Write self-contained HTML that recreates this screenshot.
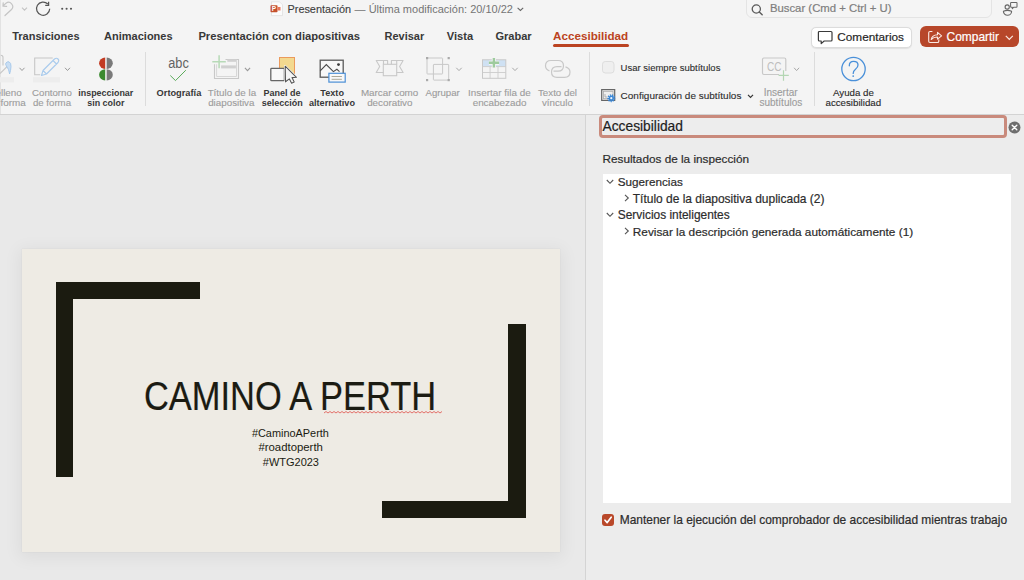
<!DOCTYPE html>
<html><head><meta charset="utf-8">
<style>
html,body{margin:0;padding:0;}
body{width:1024px;height:580px;overflow:hidden;position:relative;background:#f4f4f4;font-family:"Liberation Sans",sans-serif;}
.a{position:absolute;}
.t{position:absolute;white-space:pre;}
svg{position:absolute;overflow:visible;}
</style></head><body>
<!-- top chrome bg -->
<div class="a" style="left:0;top:0;width:1024px;height:114px;background:#f4f4f4"></div>
<div class="a" style="left:0;top:0;width:1px;height:114px;background:#e2e2e2"></div>
<!-- ribbon bottom line -->
<div class="a" style="left:0;top:114px;width:1024px;height:1px;background:#d3d3d3"></div>
<!-- canvas -->
<div class="a" style="left:0;top:115px;width:585px;height:465px;background:#e9e9e9"></div>
<!-- panel -->
<div class="a" style="left:585px;top:115px;width:1px;height:465px;background:#d4d4d4"></div>
<div class="a" style="left:586px;top:115px;width:438px;height:465px;background:#ececec"></div>

<!-- slide shadow + slide -->
<div class="a" style="left:22px;top:249px;width:538px;height:303px;background:#eeebe4;box-shadow:0 0 1px rgba(0,0,0,0.10),0 3px 16px 3px rgba(0,0,0,0.055)"></div>
<div class="a" style="left:55.5px;top:282.4px;width:144.2px;height:16.8px;background:#1b1b10"></div>
<div class="a" style="left:55.5px;top:282.4px;width:17.7px;height:194.2px;background:#1b1b10"></div>
<div class="a" style="left:508.2px;top:324.1px;width:17.7px;height:193.8px;background:#1b1b10"></div>
<div class="a" style="left:381.6px;top:501.2px;width:144.3px;height:16.7px;background:#1b1b10"></div>
<!-- squiggle -->
<svg style="left:324px;top:410.8px" width="116" height="4"><path d="M0 2 l2 -1.5 l2 1.5 l2 -1.5 l2 1.5 l2 -1.5 l2 1.5 l2 -1.5 l2 1.5 l2 -1.5 l2 1.5 l2 -1.5 l2 1.5 l2 -1.5 l2 1.5 l2 -1.5 l2 1.5 l2 -1.5 l2 1.5 l2 -1.5 l2 1.5 l2 -1.5 l2 1.5 l2 -1.5 l2 1.5 l2 -1.5 l2 1.5 l2 -1.5 l2 1.5 l2 -1.5 l2 1.5 l2 -1.5 l2 1.5 l2 -1.5 l2 1.5 l2 -1.5 l2 1.5 l2 -1.5 l2 1.5 l2 -1.5 l2 1.5 l2 -1.5 l2 1.5 l2 -1.5 l2 1.5 l2 -1.5 l2 1.5 l2 -1.5 l2 1.5 l2 -1.5 l2 1.5 l2 -1.5 l2 1.5 l2 -1.5 l2 1.5 l2 -1.5 l2 1.5 l2 -1.5 l2 1.5 l2 -1.5" fill="none" stroke="#e0514a" stroke-width="0.8"/></svg>

<!-- panel contents -->
<div class="a" style="left:599px;top:115px;width:402px;height:16.5px;border:3px solid #c98a7c;border-radius:4px;background:#ededed"></div>
<svg style="left:1008px;top:120.5px" width="13" height="13" viewBox="0 0 13 13"><circle cx="6.5" cy="6.5" r="6" fill="#6e6e6e"/><path d="M4.2 4.2 L8.8 8.8 M8.8 4.2 L4.2 8.8" stroke="#fff" stroke-width="1.4" stroke-linecap="round"/></svg>
<div class="a" style="left:602.5px;top:174px;width:408.5px;height:329px;background:#ffffff"></div>
<svg style="left:606px;top:179px" width="8" height="6" viewBox="0 0 8 6"><path d="M0.8 1 L4 4.3 L7.2 1" fill="none" stroke="#555" stroke-width="1.1"/></svg>
<svg style="left:606px;top:212px" width="8" height="6" viewBox="0 0 8 6"><path d="M0.8 1 L4 4.3 L7.2 1" fill="none" stroke="#555" stroke-width="1.1"/></svg>
<svg style="left:623.5px;top:194px" width="6" height="8" viewBox="0 0 6 8"><path d="M1 0.8 L4.3 4 L1 7.2" fill="none" stroke="#555" stroke-width="1.1"/></svg>
<svg style="left:623.5px;top:227px" width="6" height="8" viewBox="0 0 6 8"><path d="M1 0.8 L4.3 4 L1 7.2" fill="none" stroke="#555" stroke-width="1.1"/></svg>
<div class="a" style="left:602px;top:514px;width:12px;height:12px;border-radius:3px;background:#b9482a"></div>
<svg style="left:602px;top:514px" width="12" height="12" viewBox="0 0 12 12"><path d="M3 6.2 L5.2 8.6 L9.2 3.2" fill="none" stroke="#fff" stroke-width="1.7" stroke-linecap="round" stroke-linejoin="round"/></svg>

<!-- title bar -->
<div class="a" style="left:745.5px;top:-6px;width:244px;height:22px;border:1px solid #e4e4e4;border-radius:6px;background:#f5f5f5"></div>
<svg style="left:751px;top:3.5px" width="13" height="12" viewBox="0 0 13 12"><circle cx="5.3" cy="5" r="4.1" fill="none" stroke="#5a5a5a" stroke-width="1.3"/><path d="M8.3 8 L11.2 10.8" stroke="#5a5a5a" stroke-width="1.4" stroke-linecap="round"/></svg>
<!-- undo -->
<svg style="left:0;top:0" width="80" height="20" viewBox="0 0 80 20">
 <path d="M5 15.5 L11.5 9.5 A4.2 4.2 0 0 0 6 3.2 L3 6.2 M3 6.2 L3.2 2.8 M3 6.2 L6.6 6.4" fill="none" stroke="#c4c4c4" stroke-width="1.2" stroke-linecap="round" stroke-linejoin="round"/>
 <path d="M22 7.6 L24.5 10.2 L27 7.6" fill="none" stroke="#c4c4c4" stroke-width="1.1"/>
 <path d="M47.8 4 A6.6 6.6 0 1 0 49.7 8.8" fill="none" stroke="#555" stroke-width="1.25"/>
 <path d="M48.6 1.8 L48.6 5.3 L45.2 5.3" fill="none" stroke="#555" stroke-width="1.25" stroke-linejoin="miter"/>
 <circle cx="62.2" cy="8.8" r="1.05" fill="#555"/><circle cx="66.6" cy="8.8" r="1.05" fill="#555"/><circle cx="71" cy="8.8" r="1.05" fill="#555"/>
</svg>
<!-- ppt doc icon -->
<svg style="left:270px;top:1px" width="14" height="16" viewBox="0 0 14 16">
 <path d="M1.5 0.8 H9.5 L12.5 3.8 V14.6 H1.5 Z" fill="#fbfbfb" stroke="#d8d8d8" stroke-width="0.6"/>
 <rect x="0.5" y="4.3" width="7" height="7" rx="0.8" fill="#c4502c"/>
 <path d="M7.5 6 H10.5 V9.5 H7.5" fill="#e8775a"/>
 <text x="1.8" y="10.3" font-family="Liberation Sans" font-weight="bold" font-size="6.5" fill="#fff">P</text>
</svg>
<svg style="left:517px;top:6.5px" width="8" height="5" viewBox="0 0 8 5"><path d="M0.6 0.8 L3.4 3.5 L6.2 0.8" fill="none" stroke="#666" stroke-width="1.1"/></svg>
<!-- person icon -->
<svg style="left:1000px;top:0px" width="20" height="18" viewBox="0 0 20 18">
 <circle cx="7.2" cy="7" r="2.1" fill="none" stroke="#666" stroke-width="1.1"/>
 <path d="M3.4 11.2 Q7.5 9.6 11.6 11.2 A4.1 4.1 0 0 1 3.4 11.2 Z" fill="none" stroke="#666" stroke-width="1.1" stroke-linejoin="round"/>
 <path d="M11.3 2.4 H16.3 Q17 2.4 17 3.1 V6.6 Q17 7.3 16.3 7.3 H13.6 L12.3 8.6 V7.3 H11.3 Q10.6 7.3 10.6 6.6 V3.1 Q10.6 2.4 11.3 2.4 Z" fill="none" stroke="#666" stroke-width="1.05" stroke-linejoin="round"/>
</svg>
<!-- tab underline -->
<div class="a" style="left:553px;top:44.3px;width:76px;height:2.7px;border-radius:1.5px;background:#bb4321"></div>
<!-- Comentarios -->
<div class="a" style="left:811px;top:26.5px;width:99px;height:19px;border:0.8px solid #dcdcdc;border-radius:5px;background:#fff;box-shadow:0 0.5px 1px rgba(0,0,0,0.08)"></div>
<svg style="left:817px;top:29.5px" width="17" height="15" viewBox="0 0 17 15">
 <path d="M2.4 1.5 H14 Q15 1.5 15 2.5 V10 Q15 11 14 11 H7.2 L4.2 13.6 L4.2 11 H2.4 Q1.4 11 1.4 10 V2.5 Q1.4 1.5 2.4 1.5 Z" fill="none" stroke="#3a3a3a" stroke-width="1.2" stroke-linejoin="round"/>
</svg>
<!-- Compartir -->
<div class="a" style="left:920px;top:26px;width:99px;height:21px;border-radius:6px;background:#b7472a"></div>
<svg style="left:927px;top:30px" width="16" height="14" viewBox="0 0 16 14">
 <path d="M5 1.5 H3 Q1.7 1.5 1.7 2.8 V11.3 Q1.7 12.5 3 12.5 H10.5 Q11.8 12.5 11.8 11.2 V9.8" fill="none" stroke="#fbe9e3" stroke-width="1.1" stroke-linecap="round"/>
 <path d="M4.2 9.5 Q5 5 10.5 4.8 V2.3 L14.6 5.8 L10.5 9.2 V7 Q6.8 6.8 4.2 9.5 Z" fill="none" stroke="#fbe9e3" stroke-width="1.1" stroke-linejoin="round"/>
</svg>
<svg style="left:1005px;top:34.5px" width="9" height="6" viewBox="0 0 9 6"><path d="M0.8 0.8 L4.3 4.3 L7.8 0.8" fill="none" stroke="#fbe9e3" stroke-width="1.2"/></svg>

<!-- ribbon separators -->
<div class="a" style="left:145px;top:52px;width:1px;height:54px;background:#dcdcdc"></div>
<div class="a" style="left:589px;top:52px;width:1px;height:54px;background:#dcdcdc"></div>
<div class="a" style="left:814px;top:52px;width:1px;height:54px;background:#dcdcdc"></div>

<!-- ===== RIBBON ICONS ===== -->
<svg style="left:0;top:0" width="1024" height="114" viewBox="0 0 1024 114">
 <!-- Relleno (fill) partial -->
 <path d="M3 65.5 V57.5 Q3 55.3 0.8 55.3" fill="none" stroke="#c6c6c6" stroke-width="1.1"/>
 <path d="M0 73.5 L8.5 65.2" fill="none" stroke="#c6c6c6" stroke-width="1.1"/>
 <path d="M5.8 63.2 Q7 61.3 9 61.8 Q11.2 62.8 11 66.5 Q10.8 70.5 9.6 74 Q9.2 69.5 6.3 65.8 Q5.3 64.5 5.8 63.2 Z" fill="#c9def3" stroke="#a3c6ea" stroke-width="0.9"/>
 <rect x="0" y="77.2" width="14" height="5.2" fill="#ededed"/>
 <path d="M19.5 67.8 L22 70.5 L24.5 67.8" fill="none" stroke="#9a9a9a" stroke-width="1"/>
 <!-- Contorno -->
 <path d="M52.7 58 H34.7 V74.8 H40.2" fill="none" stroke="#c6c6c6" stroke-width="1.1"/>
 <path d="M41.5 75.5 L43 70.5 L54.5 59 Q56.5 57.5 58 59 Q59.5 60.5 58 62.5 L46.5 74 Z M43 70.5 L46.5 74 M53 60.5 L56.5 64" fill="none" stroke="#a9cbed" stroke-width="1.1" stroke-linejoin="round"/>
 <rect x="33" y="77.2" width="27" height="5.2" fill="#ededed"/>
 <path d="M65 67.8 L67.5 70.5 L70 67.8" fill="none" stroke="#9a9a9a" stroke-width="1"/>
 <!-- inspeccionar sin color -->
 <path d="M105.2 57.6 A6.1 5.7 0 0 0 105.2 69 Z" fill="#c23b22"/>
 <path d="M106.7 57.6 A6.1 5.7 0 0 1 106.7 69 Z" fill="#7a7a7a"/>
 <path d="M105.2 69.2 A6.1 5.6 0 0 0 105.2 80.4 Z" fill="#3b8a2f"/>
 <path d="M106.7 69.2 A6.1 5.6 0 0 1 106.7 80.4 Z" fill="#7a7a7a"/>
 <!-- Ortografía -->
 <text x="168.2" y="67.6" font-family="Liberation Sans" font-size="14" fill="#636363" textLength="20.6" lengthAdjust="spacingAndGlyphs">abc</text>
 <path d="M170.3 75.5 L175.5 80.6 L185.8 70.2" fill="none" stroke="#5aab5a" stroke-width="1"/>
 <!-- Título de la diapositiva -->
 <path d="M225.5 59.5 H238.5 V78.5 H214.5 V64.3" fill="none" stroke="#c8c8c8" stroke-width="1.1"/>
 <path d="M216.6 64.3 V76.5 H236.5 V61.5" fill="none" stroke="#d4d4d4" stroke-width="0.9"/>
 <rect x="227.3" y="59.3" width="9.5" height="2.5" fill="#d0d0d0"/>
 <rect x="221.1" y="65.4" width="14.8" height="3" fill="#d0d0d0"/>
 <path d="M212.3 61.7 H225.8 M219.1 55.2 V68.2" fill="none" stroke="#b7dab7" stroke-width="1.5"/>
 <path d="M244.9 67.8 L247.5 70.6 L250.1 67.8" fill="none" stroke="#9a9a9a" stroke-width="1.1"/>
 <!-- Panel de selección -->
 <rect x="279.5" y="57.5" width="15" height="16" fill="#f3d98f" stroke="#eb9a5c" stroke-width="1"/>
 <rect x="270.8" y="68.4" width="13.6" height="12.3" rx="0.8" fill="#f8f8f8" stroke="#666" stroke-width="1.3"/>
 <path d="M285.2 66.2 L296.5 77.3 L292 77.6 L294.2 82.1 L291.6 83.2 L289.4 78.9 L285.5 81.8 Z" fill="#f0f0f0" stroke="#fff" stroke-width="2.2" stroke-linejoin="round"/>
 <path d="M285.2 66.2 L296.5 77.3 L292 77.6 L294.2 82.1 L291.6 83.2 L289.4 78.9 L285.5 81.8 Z" fill="#f5f5f5" stroke="#555" stroke-width="1.1" stroke-linejoin="round"/>
 <!-- Texto alternativo -->
 <rect x="320.2" y="60.2" width="23" height="17" fill="#f8f8f8" stroke="#5a5a5a" stroke-width="1.3"/>
 <path d="M320.2 70.8 L326.3 64.6 L333.4 71.6 L336.9 69.3 L339.5 71.6" fill="none" stroke="#4a4a4a" stroke-width="1.1"/>
 <circle cx="338.5" cy="64.6" r="1.4" fill="#3a3a3a"/>
 <rect x="328.9" y="73.3" width="16.3" height="8.8" fill="#f8f8f8" stroke="#4b8fd6" stroke-width="1.2"/>
 <path d="M331.6 76.5 H341.9 M331.6 79.3 H341.9" stroke="#a19f8f" stroke-width="0.9"/>
 <!-- Marcar como decorativo -->
 <path d="M383.5 60.5 H376.2 L379.7 66.5 L376.2 72.5 H383.5 M396.7 60.5 H403.1 L399.6 66.5 L403.1 72.5 H396.7 M383.5 64.3 V60.5 H387.6 V64.3 M391.4 64.3 V60.5 H396.7 V64.3" fill="none" stroke="#c8c8c8" stroke-width="1.1" stroke-linejoin="round"/>
 <rect x="383.3" y="64.3" width="13.4" height="11.4" fill="none" stroke="#c8c8c8" stroke-width="1.1"/>
 <!-- Agrupar -->
 <rect x="427" y="58" width="15.6" height="16" rx="0.6" fill="none" stroke="#c8c8c8" stroke-width="1"/>
 <rect x="433.4" y="64.4" width="15.3" height="15.7" rx="0.6" fill="none" stroke="#c8c8c8" stroke-width="1"/>
 <rect x="426" y="57" width="2.2" height="2.2" fill="#aaa"/><rect x="447.6" y="57" width="2.2" height="2.2" fill="#aaa"/>
 <rect x="426" y="79" width="2.2" height="2.2" fill="#aaa"/><rect x="447.6" y="79" width="2.2" height="2.2" fill="#aaa"/>
 <path d="M456.3 67.8 L459 70.6 L461.7 67.8" fill="none" stroke="#a8a8a8" stroke-width="1"/>
 <!-- Insertar fila de encabezado -->
 <rect x="482.5" y="59.8" width="23.3" height="6.8" fill="#cfe1f3"/>
 <rect x="482.5" y="59.8" width="23.3" height="18.5" fill="none" stroke="#c8c8c8" stroke-width="1"/>
 <path d="M482.5 66.6 H505.8 M482.5 72.5 H505.8 M490.1 66.6 V78.3 M498 66.6 V78.3" stroke="#cccccc" stroke-width="0.9"/>
 <path d="M488.9 62.8 H499.1 M493.9 58 V67.6" stroke="#f4f4f4" stroke-width="4.2"/>
 <path d="M488.9 62.8 H499.1 M493.9 58 V67.6" stroke="#9ecb9e" stroke-width="2.4"/>
 <path d="M512.3 67.8 L515 70.6 L517.7 67.8" fill="none" stroke="#a8a8a8" stroke-width="1"/>
 <!-- Texto del vínculo -->
 <path d="M549.5 71 Q545.5 69.5 545.5 65.8 Q545.5 60.5 551 60.5 H558 Q563.5 60.5 563.5 65.8 Q563.5 71.2 558 71.2 H553.5" fill="none" stroke="#c8c8c8" stroke-width="1.2"/>
 <path d="M565.5 66.9 Q570 68.4 570 72 Q570 77.3 564.5 77.3 H557 Q551.5 77.3 551.5 72 Q551.5 66.6 557 66.6 H561.5" fill="none" stroke="#c8c8c8" stroke-width="1.2"/>
 <!-- checkbox unchecked -->
 <rect x="602.5" y="61.5" width="11.5" height="11.5" rx="2.8" fill="#efefef" stroke="#dadada" stroke-width="0.9"/>
 <!-- config subtitulos -->
 <rect x="601.7" y="89.6" width="13" height="10.8" fill="#efefef" stroke="#666" stroke-width="1.2"/>
 <rect x="603.4" y="91.3" width="9.6" height="7.4" fill="none" stroke="#aaa" stroke-width="0.8"/>
 <path d="M605 94 V97 H607" fill="none" stroke="#999" stroke-width="0.7"/>
 <g transform="translate(611.3 98.2)">
  <circle r="3.2" fill="none" stroke="#3a87d6" stroke-width="1.6" stroke-dasharray="1.3 0.9"/>
  <circle r="2.6" fill="#3a87d6"/>
  <circle r="1.1" fill="#eaf2fb"/>
 </g>
 <path d="M748 94.8 L750.5 97.3 L753 94.8" fill="none" stroke="#333" stroke-width="1.2"/>
 <!-- CC -->
 <path d="M779 74.5 H764 Q762.5 74.5 762.5 73 V59.5 Q762.5 58 764 58 H784.3 Q785.8 58 785.8 59.5 V71" fill="none" stroke="#c8c8c8" stroke-width="1.2"/>
 <text x="767" y="71" font-family="Liberation Sans" font-size="12" fill="#bdbdbd" textLength="14.5" lengthAdjust="spacingAndGlyphs">CC</text>
 <path d="M778.6 75.4 H788.8 M783.5 70.2 V80.7" stroke="#b3d6b3" stroke-width="1.2"/>
 <path d="M794.1 67.8 L796.6 70.6 L799.1 67.8" fill="none" stroke="#a8a8a8" stroke-width="1"/>
 <!-- help -->
 <circle cx="853.5" cy="69" r="11.7" fill="none" stroke="#4a90d9" stroke-width="1.3"/>
 <path d="M849.3 65.8 Q849.3 61.4 853.6 61.4 Q858 61.4 858 65 Q858 67.3 855.5 69.2 Q853.2 71 853.2 73.4" fill="none" stroke="#4a90d9" stroke-width="1.3" stroke-linecap="round"/>
 <circle cx="853.2" cy="76.1" r="0.9" fill="#4a90d9"/>
</svg>

<span class="t" style="left:287.50px;top:4px;font-size:10.88px;line-height:10.88px;font-weight:normal;color:#3e3e3e;-webkit-text-stroke:0.12px currentColor;">Presentación</span>
<span class="t" style="left:354.60px;top:4px;font-size:11.00px;line-height:11.00px;font-weight:normal;color:#747474;">— Última modificación: 20/10/22</span>
<span class="t" style="left:769.90px;top:3px;font-size:11.35px;line-height:11.35px;font-weight:normal;color:#7e7e7e;-webkit-text-stroke:0.2px currentColor;">Buscar (Cmd + Ctrl + U)</span>
<span class="t" style="left:12.20px;top:31px;font-size:11.02px;line-height:11.02px;font-weight:bold;color:#383838;">Transiciones</span>
<span class="t" style="left:104.10px;top:31px;font-size:11.01px;line-height:11.01px;font-weight:bold;color:#383838;">Animaciones</span>
<span class="t" style="left:198.40px;top:31px;font-size:11.23px;line-height:11.23px;font-weight:bold;color:#383838;">Presentación con diapositivas</span>
<span class="t" style="left:384.60px;top:31px;font-size:10.96px;line-height:10.96px;font-weight:bold;color:#383838;">Revisar</span>
<span class="t" style="left:446.80px;top:31px;font-size:11.09px;line-height:11.09px;font-weight:bold;color:#383838;">Vista</span>
<span class="t" style="left:495.40px;top:31px;font-size:11.07px;line-height:11.07px;font-weight:bold;color:#383838;">Grabar</span>
<span class="t" style="left:553.10px;top:30px;font-size:11.65px;line-height:11.65px;font-weight:bold;color:#bb4321;">Accesibilidad</span>
<span class="t" style="left:837.30px;top:31px;font-size:11.77px;line-height:11.77px;font-weight:normal;color:#262626;-webkit-text-stroke:0.2px currentColor;">Comentarios</span>
<span class="t" style="left:946.60px;top:32px;font-size:11.94px;line-height:11.94px;font-weight:normal;color:#ffffff;-webkit-text-stroke:0.2px currentColor;">Compartir</span>
<span class="t" style="left:-11.67px;top:88px;font-size:9.90px;line-height:9.90px;font-weight:normal;color:#9c9c9c;-webkit-text-stroke:0.12px currentColor;">Relleno</span>
<span class="t" style="left:-13.27px;top:98px;font-size:9.90px;line-height:9.90px;font-weight:normal;color:#9c9c9c;-webkit-text-stroke:0.12px currentColor;">de forma</span>
<span class="t" style="left:32.07px;top:88px;font-size:9.66px;line-height:9.66px;font-weight:normal;color:#9c9c9c;-webkit-text-stroke:0.12px currentColor;">Contorno</span>
<span class="t" style="left:32.93px;top:98px;font-size:9.66px;line-height:9.66px;font-weight:normal;color:#9c9c9c;-webkit-text-stroke:0.12px currentColor;">de forma</span>
<span class="t" style="left:78.32px;top:89px;font-size:8.91px;line-height:8.91px;font-weight:bold;color:#383838;">inspeccionar</span>
<span class="t" style="left:87.28px;top:99px;font-size:8.91px;line-height:8.91px;font-weight:bold;color:#383838;">sin color</span>
<span class="t" style="left:156.60px;top:89px;font-size:9.25px;line-height:9.25px;font-weight:bold;color:#383838;">Ortografía</span>
<span class="t" style="left:207.63px;top:88px;font-size:9.81px;line-height:9.81px;font-weight:normal;color:#9c9c9c;-webkit-text-stroke:0.12px currentColor;">Título de la</span>
<span class="t" style="left:208.17px;top:98px;font-size:9.81px;line-height:9.81px;font-weight:normal;color:#9c9c9c;-webkit-text-stroke:0.12px currentColor;">diapositiva</span>
<span class="t" style="left:263.60px;top:89px;font-size:9.00px;line-height:9.00px;font-weight:bold;color:#383838;">Panel de</span>
<span class="t" style="left:261.79px;top:99px;font-size:9.00px;line-height:9.00px;font-weight:bold;color:#383838;">selección</span>
<span class="t" style="left:320.33px;top:89px;font-size:9.12px;line-height:9.12px;font-weight:bold;color:#383838;">Texto</span>
<span class="t" style="left:308.94px;top:99px;font-size:9.12px;line-height:9.12px;font-weight:bold;color:#383838;">alternativo</span>
<span class="t" style="left:360.93px;top:88px;font-size:9.84px;line-height:9.84px;font-weight:normal;color:#9c9c9c;-webkit-text-stroke:0.12px currentColor;">Marcar como</span>
<span class="t" style="left:367.16px;top:98px;font-size:9.84px;line-height:9.84px;font-weight:normal;color:#9c9c9c;-webkit-text-stroke:0.12px currentColor;">decorativo</span>
<span class="t" style="left:425.50px;top:88px;font-size:9.64px;line-height:9.64px;font-weight:normal;color:#9c9c9c;-webkit-text-stroke:0.12px currentColor;">Agrupar</span>
<span class="t" style="left:468.11px;top:88px;font-size:9.90px;line-height:9.90px;font-weight:normal;color:#9c9c9c;-webkit-text-stroke:0.12px currentColor;">Insertar fila de</span>
<span class="t" style="left:472.65px;top:98px;font-size:9.90px;line-height:9.90px;font-weight:normal;color:#9c9c9c;-webkit-text-stroke:0.12px currentColor;">encabezado</span>
<span class="t" style="left:537.99px;top:88px;font-size:9.75px;line-height:9.75px;font-weight:normal;color:#9c9c9c;-webkit-text-stroke:0.12px currentColor;">Texto del</span>
<span class="t" style="left:541.91px;top:98px;font-size:9.75px;line-height:9.75px;font-weight:normal;color:#9c9c9c;-webkit-text-stroke:0.12px currentColor;">vínculo</span>
<span class="t" style="left:620.60px;top:63px;font-size:9.51px;line-height:9.51px;font-weight:normal;color:#2e2e2e;-webkit-text-stroke:0.12px currentColor;">Usar siempre subtítulos</span>
<span class="t" style="left:620.60px;top:91px;font-size:9.98px;line-height:9.98px;font-weight:normal;color:#2e2e2e;-webkit-text-stroke:0.12px currentColor;">Configuración de subtítulos</span>
<span class="t" style="left:763.72px;top:88px;font-size:10.00px;line-height:10.00px;font-weight:normal;color:#9c9c9c;-webkit-text-stroke:0.12px currentColor;">Insertar</span>
<span class="t" style="left:759.44px;top:98px;font-size:10.00px;line-height:10.00px;font-weight:normal;color:#9c9c9c;-webkit-text-stroke:0.12px currentColor;">subtítulos</span>
<span class="t" style="left:833.02px;top:88px;font-size:9.73px;line-height:9.73px;font-weight:normal;color:#2a2a2a;-webkit-text-stroke:0.12px currentColor;">Ayuda de</span>
<span class="t" style="left:825.49px;top:98px;font-size:9.73px;line-height:9.73px;font-weight:normal;color:#2a2a2a;-webkit-text-stroke:0.12px currentColor;">accesibilidad</span>
<span class="t" style="left:602.50px;top:120px;font-size:13.79px;line-height:13.79px;font-weight:normal;color:#1e1e1e;-webkit-text-stroke:0.2px currentColor;">Accesibilidad</span>
<span class="t" style="left:602.50px;top:153px;font-size:11.77px;line-height:11.77px;font-weight:normal;color:#2c2c2c;-webkit-text-stroke:0.2px currentColor;">Resultados de la inspección</span>
<span class="t" style="left:617.80px;top:176px;font-size:11.69px;line-height:11.69px;font-weight:normal;color:#2c2c2c;-webkit-text-stroke:0.2px currentColor;">Sugerencias</span>
<span class="t" style="left:632.80px;top:194px;font-size:11.97px;line-height:11.97px;font-weight:normal;color:#2c2c2c;-webkit-text-stroke:0.2px currentColor;">Título de la diapositiva duplicada (2)</span>
<span class="t" style="left:617.80px;top:210px;font-size:11.91px;line-height:11.91px;font-weight:normal;color:#2c2c2c;-webkit-text-stroke:0.2px currentColor;">Servicios inteligentes</span>
<span class="t" style="left:632.80px;top:227px;font-size:11.82px;line-height:11.82px;font-weight:normal;color:#2c2c2c;-webkit-text-stroke:0.2px currentColor;">Revisar la descripción generada automáticamente (1)</span>
<span class="t" style="left:619.70px;top:515px;font-size:11.96px;line-height:11.96px;font-weight:normal;color:#2c2c2c;-webkit-text-stroke:0.2px currentColor;">Mantener la ejecución del comprobador de accesibilidad mientras trabajo</span>
<span class="t" style="left:144.20px;top:377px;font-size:39.80px;line-height:39.80px;font-weight:normal;color:#1b1b12;transform:scaleX(0.8650);transform-origin:0 0;-webkit-text-stroke:0.2px currentColor;">CAMINO A PERTH</span>
<span class="t" style="left:251.90px;top:428px;font-size:10.92px;line-height:10.92px;font-weight:normal;color:#1b1b12;">#CaminoAPerth</span>
<span class="t" style="left:258.40px;top:442px;font-size:11.39px;line-height:11.39px;font-weight:normal;color:#1b1b12;">#roadtoperth</span>
<span class="t" style="left:262.80px;top:457px;font-size:10.99px;line-height:10.99px;font-weight:normal;color:#1b1b12;">#WTG2023</span>
</body></html>
